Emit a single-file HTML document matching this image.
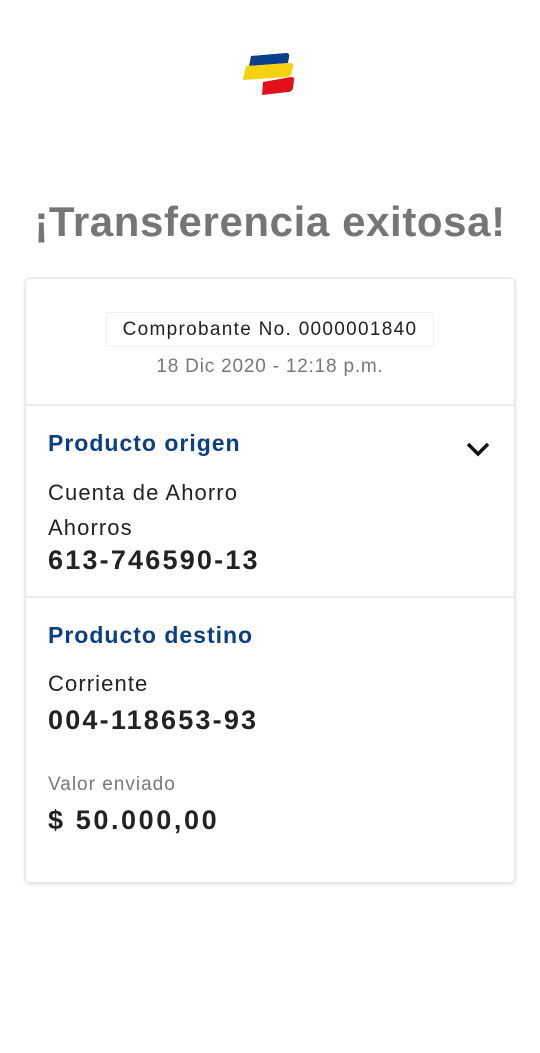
<!DOCTYPE html>
<html><head><meta charset="utf-8"><style>
*{margin:0;padding:0;box-sizing:border-box}
body{width:540px;height:1053px;background:#fff;font-family:"Liberation Sans",sans-serif;position:relative;overflow:hidden}
.a{position:absolute;white-space:nowrap}
.card{position:absolute;left:25px;top:278px;width:490px;height:605px;border:1px solid #e6e6e6;border-radius:4px;box-shadow:0 1px 4px rgba(0,0,0,.15);background:#fff}
.h{color:#0b3f84;font-size:23px;font-weight:bold;left:48px;letter-spacing:1px}
.t{color:#222;font-size:22px;left:48px;letter-spacing:1.1px}
.n{color:#222;font-size:27px;font-weight:bold;left:48px;letter-spacing:2.2px}
.line{position:absolute;left:26px;width:488px;height:2px;background:#ececec}
</style></head><body>
<svg class="a" style="left:240px;top:50px" width="60" height="50" viewBox="240 50 60 50">
<path d="M251 56 L286 53 Q290 53 289 57 L288 63 L249 66 Z" fill="#0b3f8a"/>
<path d="M246 66 L290 63 Q294 63 293 67 L291 74 Q290 77 286 77 L243 80 Z" fill="#f5d10f"/>
<path d="M263 82 L291 77 Q295 77 294 80 L293 88 Q292 92 288 92 L262 95 Z" fill="#e1101b"/>
</svg>
<div class="a" style="left:0;width:540px;text-align:center;top:198px;font-size:42px;font-weight:bold;color:#757575;letter-spacing:0.6px">¡Transferencia exitosa!</div>
<div class="card"></div>
<div class="a" style="left:106px;top:312px;width:328px;height:35px;border:1px solid #f0f0f0;text-align:center;line-height:33px;font-size:19px;color:#222;letter-spacing:1.3px">Comprobante No. 0000001840</div>
<div class="a" style="left:0;width:540px;text-align:center;top:356px;font-size:19px;color:#777;letter-spacing:0.8px">18 Dic 2020 - 12:18 p.m.</div>
<div class="line" style="top:404px"></div>
<div class="a h" style="top:430px">Producto origen</div>
<svg class="a" style="left:465px;top:441px" width="28" height="18"><path d="M3 3 L13 13 L23 3" stroke="#111" stroke-width="3.5" fill="none"/></svg>
<div class="a t" style="top:480px">Cuenta de Ahorro</div>
<div class="a t" style="top:515px">Ahorros</div>
<div class="a n" style="top:545px">613-746590-13</div>
<div class="line" style="top:596px"></div>
<div class="a h" style="top:622px">Producto destino</div>
<div class="a t" style="top:671px">Corriente</div>
<div class="a n" style="top:705px">004-118653-93</div>
<div class="a" style="left:48px;top:774px;font-size:19px;color:#777;letter-spacing:1px">Valor enviado</div>
<div class="a n" style="top:805px;letter-spacing:2.6px">$ 50.000,00</div>
</body></html>
